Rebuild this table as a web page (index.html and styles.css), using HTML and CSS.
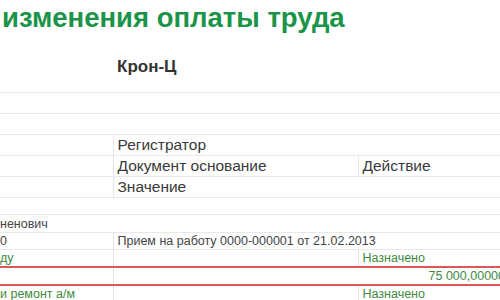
FILE: index.html
```html
<!DOCTYPE html>
<html lang="ru">
<head>
<meta charset="utf-8">
<link rel="stylesheet" href="styles.css">
</head>
<body>
<h1 class="title">изменения оплаты труда</h1>
<div class="org">Крон-Ц</div>
<table class="report">
  <colgroup><col class="c1"><col class="c2"><col class="c3"></colgroup>
  <tbody>
    <tr class="hrow"><td></td><td></td><td></td></tr>
    <tr class="hrow"><td></td><td></td><td></td></tr>
    <tr class="hrow"><td></td><td class="vl" colspan="2">Регистратор</td></tr>
    <tr class="hrow"><td></td><td class="vl">Документ основание</td><td class="vl">Действие</td></tr>
    <tr class="hrow"><td></td><td class="vl" colspan="2">Значение</td></tr>
    <tr class="drow"><td></td><td></td><td></td></tr>
    <tr class="drow tall"><td class="clip">ненович</td><td></td><td></td></tr>
    <tr class="drow"><td class="clip">0</td><td class="vl" colspan="2">Прием на работу 0000-000001 от 21.02.2013</td></tr>
    <tr class="drow green"><td class="clip">ду</td><td class="vl"></td><td class="vl">Назначено</td></tr>
    <tr class="drow green sel"><td></td><td class="vl"></td><td class="num">75 000,00000</td></tr>
    <tr class="drow green"><td class="clip">и ремонт а/м</td><td class="vl"></td><td class="vl">Назначено</td></tr>
  </tbody>
</table>
</body>
</html>
```
FILE: styles.css
```css
html, body {
  margin: 0;
  background: #fff;
}
body {
  width: 500px;
  height: 300px;
  overflow: hidden;
  font-family: "Liberation Sans", Arial, sans-serif;
  color: #333;
}
.title {
  margin: 0;
  padding: 2px 0 0 2px;
  font-size: 27.5px;
  line-height: 31px;
  font-weight: bold;
  color: #1a9448;
  white-space: nowrap;
}
.org {
  margin-top: 24px;
  padding-left: 117px;
  font-size: 17px;
  line-height: 20px;
  font-weight: bold;
  color: #333;
}
.report {
  margin-top: 15px;
  width: 516px;
  table-layout: fixed;
  border-collapse: collapse;
}
.c1 { width: 113px; }
.c2 { width: 245px; }
.report td {
  padding: 0 4px;
  border-top: 1px solid #e8e8e8;
  white-space: nowrap;
  overflow: hidden;
}
.report td.vl { border-left: 1px solid #e4e4e4; }
.report td.clip { padding-left: 0; }
.hrow td {
  height: 20px;
  font-size: 15.5px;
  line-height: 20px;
  color: #3a3a3a;
}
.drow td {
  height: 16px;
  font-size: 12.5px;
  line-height: 16px;
  color: #444;
}
.drow.tall td { height: 17px; }
.green td { color: #3f8a3f; }
.sel td {
  border-top: 2px solid #de5656;
  border-bottom: 2px solid #de5656;
}
.sel td.num {
  text-align: right;
  padding-right: 11px;
}
```
